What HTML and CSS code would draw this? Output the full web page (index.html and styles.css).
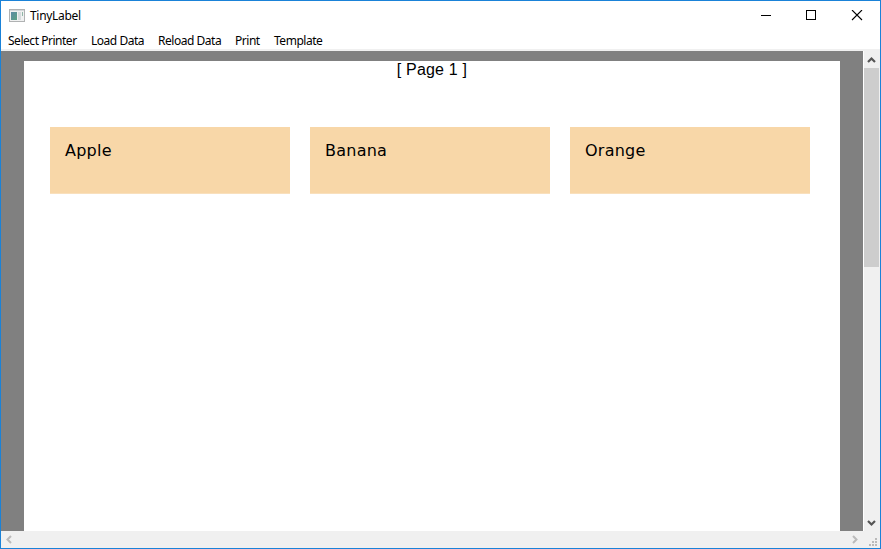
FILE: index.html
```
<!DOCTYPE html>
<html lang="en">
<head>
<meta charset="utf-8">
<title>TinyLabel</title>
<link rel="stylesheet" href="styles.css">
</head>
<body>
<div class="window">
  <header class="titlebar">
    <svg class="app-icon" width="16" height="14" viewBox="0 0 16 14">
      <defs><linearGradient id="pane" x1="0" y1="0" x2="1" y2="1"><stop offset="0" stop-color="#5c8ba5"/><stop offset="1" stop-color="#5ba183"/></linearGradient></defs>
      <rect x=".5" y=".5" width="15" height="12" fill="#f0f1f1" stroke="#b0b2b3"/>
      <path d="M1 1.5h14" stroke="#d3d7d9"/>
      <rect x="2" y="3" width="6" height="8" fill="url(#pane)"/>
      <rect x="9" y="3" width="3" height="8" fill="#d5dbdd"/>
      <rect x="13" y="3" width="1" height="4" fill="#8fb5a7"/>
    </svg>
    <span class="title">TinyLabel</span>
    <svg class="controls" width="102" height="12" viewBox="0 0 102 12" fill="none" stroke="#000">
      <path d="M0 5.5h10"/>
      <rect x="45.5" y=".5" width="9" height="9"/>
      <path d="M91 0l10 10M101 0l-10 10" stroke-width="1.1"/>
    </svg>
  </header>
  <nav class="menu">
    <span class="item w-select">Select Printer</span>
    <span class="item w-load">Load Data</span>
    <span class="item w-reload">Reload Data</span>
    <span class="item w-print">Print</span>
    <span class="item">Template</span>
  </nav>
  <main class="view">
    <section class="canvas">
      <div class="page">
        <div class="page-title">[ Page 1 ]</div>
        <div class="labels">
          <div class="label">Apple</div>
          <div class="label">Banana</div>
          <div class="label">Orange</div>
        </div>
      </div>
    </section>
    <aside class="vscroll">
      <svg width="16" height="17" viewBox="0 0 16 17"><path d="M4 11L7.5 7.5 11 11" fill="none" stroke="#555" stroke-width="2.2"/></svg>
      <div class="thumb"></div>
      <svg class="down" width="16" height="17" viewBox="0 0 16 17"><path d="M4 7L7.5 10.5 11 7" fill="none" stroke="#555" stroke-width="2.2"/></svg>
    </aside>
  </main>
  <footer class="hscroll">
    <svg width="17" height="17" viewBox="0 0 17 17"><path d="M10 5L6.5 8.5 10 12" fill="none" stroke="#bbb" stroke-width="2"/></svg>
    <svg class="right" width="17" height="17" viewBox="0 0 17 17"><path d="M7 5l3.5 3.5L7 12" fill="none" stroke="#bbb" stroke-width="2"/></svg>
    <svg width="17" height="17" viewBox="0 0 17 17" fill="#bababa"><path d="M12 7h2v2h-2zM9 10h2v2H9zM12 10h2v2h-2zM6 13h2v2H6zM9 13h2v2H9zM12 13h2v2h-2z"/></svg>
  </footer>
</div>
</body>
</html>
```
FILE: styles.css
```
* { box-sizing: border-box; }
body { margin: 0; overflow: hidden; }
svg { display: block; flex: none; }
.window {
  width: 881px; height: 549px;
  border: 1px solid #1a82d8;
  background: #fff; color: #000;
  display: flex; flex-direction: column;
  font: 12px/16px "Noto Sans", sans-serif;
}
.titlebar { height: 29px; display: flex; align-items: flex-start; padding: 8px 17px 0 8px; }
.title { margin: -1px 0 0 5px; font-size: 12px; letter-spacing: -0.3px; }
.controls { margin: 1px 0 0 auto; }
.menu {
  height: 21px; display: flex; padding: 3px 0 0 7px;
  border-bottom: 2px solid #f0f0f0;
  font-size: 12px; letter-spacing: -0.47px; white-space: nowrap;
}
.w-select { width: 83px; }
.w-load { width: 67px; }
.w-reload { width: 77px; }
.w-print { width: 39px; }
.view { height: 480px; display: flex; }
.canvas { flex: none; width: 862px; background: #808080; padding: 10px 23px 0; }
.page { width: 816px; height: 470px; background: #fff; }
.page-title { height: 66px; text-align: center; font: 16px/18px "Liberation Sans", sans-serif; letter-spacing: 0.2px; }
.labels { display: flex; gap: 20px; padding-left: 26px; }
.label {
  width: 240px; height: 67px; background: #f8d7a8;
  border-bottom: 1px solid #f9e0bd;
  padding: 14px 15px; font: 16px/19px "DejaVu Sans", sans-serif; letter-spacing: 0.25px;
}
.vscroll { flex: none; width: 17px; background: #f0f0f0; border-left: 1px solid #fff; display: flex; flex-direction: column; }
.thumb { width: 15px; height: 199px; background: #cdcdcd; }
.down { margin-top: auto; }
.hscroll { height: 17px; display: flex; background: #f0f0f0; }
.right { margin-left: auto; }
```
